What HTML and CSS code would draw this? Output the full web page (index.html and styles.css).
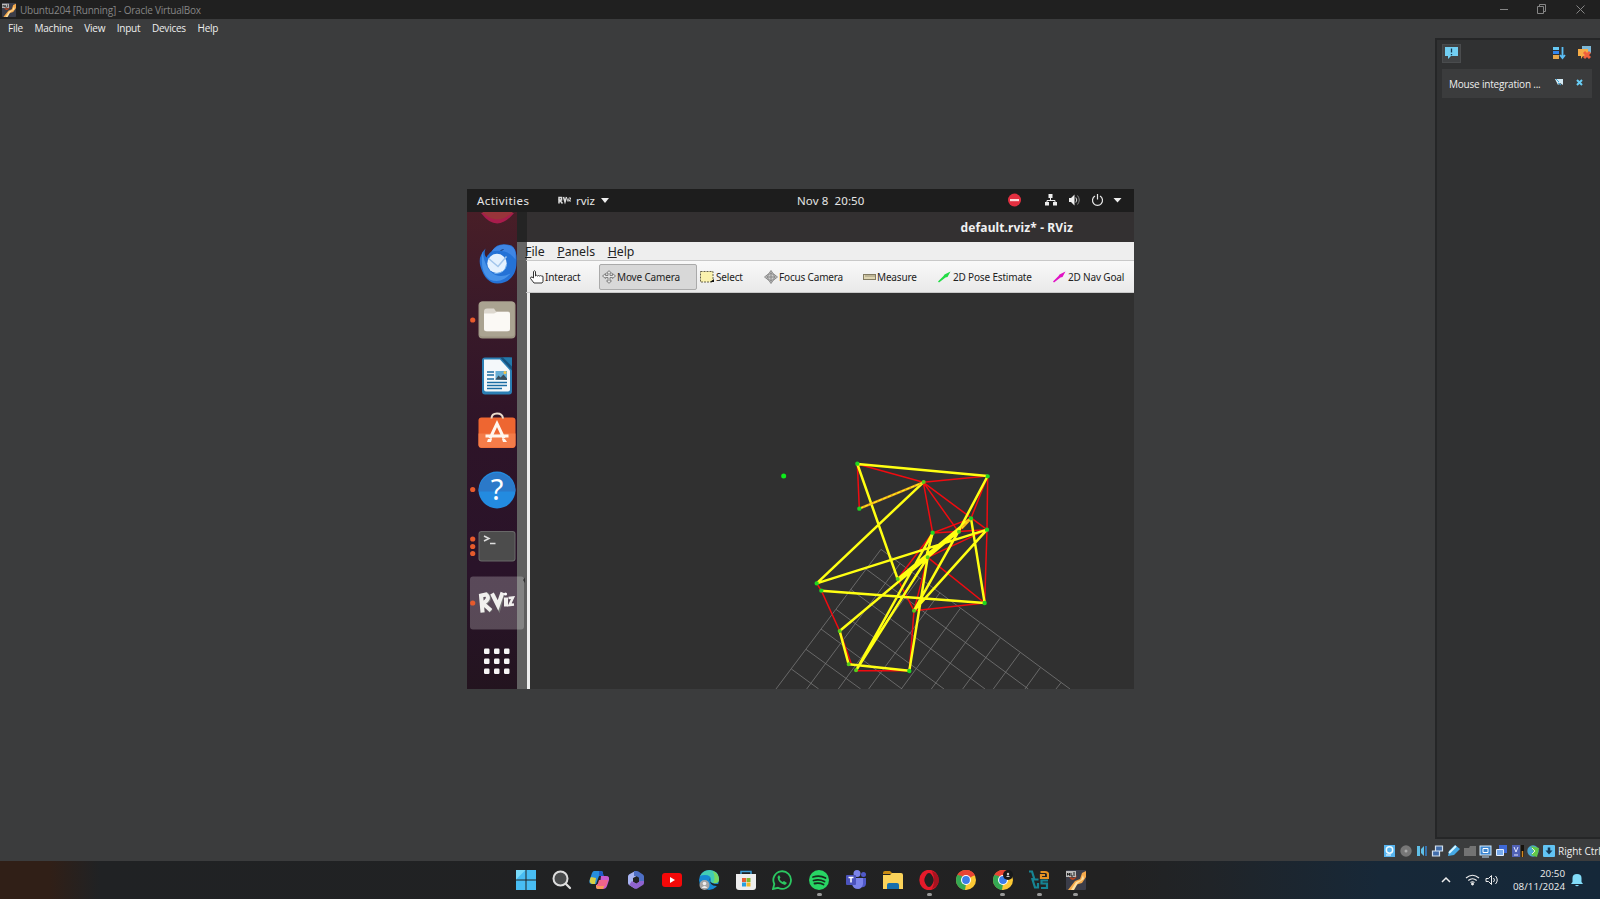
FILE: index.html
```html
<!DOCTYPE html>
<html lang="en">
<head>
<meta charset="utf-8">
<title>Ubuntu204 [Running] - Oracle VirtualBox</title>
<link rel="stylesheet" href="styles.css">
</head>
<body>
<svg class="defs" width="0" height="0">
  <defs>
    <symbol id="vbox" viewBox="0 0 20 20">
      <rect width="20" height="20" rx="1" fill="#3b3d49"/>
      <path d="M2 20 9 11 14 9 16 3 20 1V7L16 13 9 15 7 20Z" fill="#f5a94b"/>
      <path d="M5 20 10 12 15 10 17 5 18 9 12 13 8 20Z" fill="#ffe0a0"/>
      <path d="M3 7C6 12 10 10 11 5L8 8Z" fill="#b5441e"/>
      <rect y="1" width="10" height="6" fill="#bbb"/>
      <path d="M1.500 5.500V3l2 2.500V3M5 3v3h2M8 2v4" stroke="#222" fill="none"/>
    </symbol>
    <symbol id="chrome" viewBox="0 0 20 20">
      <circle cx="10" cy="10" r="10" fill="#fcc934"/>
      <path d="M10 10 1.340 5A10 10 0 0 1 18.660 5Z" fill="#e84435"/>
      <path d="M10 10 10 20A10 10 0 0 1 1.340 5Z" fill="#34a853"/>
      <path d="M10 5.500h8.900L18.600 5A10 10 0 0 0 10 0Z" fill="#e84435"/>
      <path d="M6 12.200 1.340 5 6 6Z" fill="#34a853"/>
      <path d="M14 12.500 10 20H9L10 14Z" fill="#fcc934"/>
      <circle cx="10" cy="10" r="5" fill="#fff"/><circle cx="10" cy="10" r="3.900" fill="#3b7de9"/>
    </symbol>
  </defs>
</svg>
<div class="screen">
  <header class="titlebar">
    <svg class="app-icon" width="14" height="14"><use href="#vbox"/></svg>
    <span class="window-title">Ubuntu204 [Running] - Oracle VirtualBox</span>
    <svg class="window-buttons" width="96" height="18" viewBox="0 0 96 18" fill="none" stroke="#858585">
      <path d="M0 8.500h8M37.500 5.500h6v7h-6zM39.500 5.500v-2h6v7h-2M76.500 4.500l8 8M84.500 4.500l-8 8"/>
    </svg>
  </header>
  <nav class="menubar"><span>File</span><span>Machine</span><span>View</span><span>Input</span><span>Devices</span><span>Help</span></nav>

  <main class="workspace">
    <section class="stage">
      <div class="guest">
        <div class="gnome-bar">
          <span class="activities">Activities</span>
          <svg class="rviz-mini" width="13" height="9" viewBox="0 0 13 9" fill="none" stroke="#ddd" stroke-width="1.500"><path d="M1 7.500V1.500h2.500v2.500H1.500L4.500 7.500M5.500 1l1.500 5 1.500-5M10 2.500v3"/><path d="M10.800 2h2l-1.500 3H13" stroke-width="1"/></svg>
          <span class="app-name">rviz</span>
          <i class="caret"></i>
          <span class="clock">Nov 8&nbsp; 20:50</span>
          <svg class="gnome-status" width="118" height="16" viewBox="0 0 118 16">
            <circle cx="7.500" cy="8" r="6.500" fill="#e32f40"/><rect x="3" y="7" width="9" height="2.200" fill="#fbdada"/>
            <path d="M41.500 2h4v4h-4zM38 10h4v3.500h-4zM46 10h4v3.500h-4z" fill="#eee"/><path d="M43.500 5v3.500M40 11V8.500h8V11" stroke="#eee" fill="none"/>
            <path d="M62 6h2l3.500-3.500v11L64 10h-2z" fill="#eee"/><path d="M68.800 5.500q2 2.500 0 5" stroke="#ddd" fill="none"/><path d="M70.500 3.500q3.500 4.500 0 9" stroke="#888" fill="none"/>
            <path d="M88 4A5 5 0 1 0 93 4M90.500 2v5.500" stroke="#e8e8e8" stroke-width="1.200" fill="none"/>
            <path d="M106.500 6h8l-4 4.500z" fill="#eee"/>
          </svg>
        </div>
        <div class="desktop">
          <aside class="dock">
            <svg class="slot-top" width="50" height="23.500" viewBox="467 212 50 23.500"><path d="M481 213Q497 234 514 213Z" fill="#a81c4c"/><path d="M482 212Q497 227 513 212Z" fill="#98343a"/></svg>
            <svg width="50" height="56" viewBox="467 235.500 50 56">
              <g transform="translate(-1.500 0)"><path d="M487 248Q479 256 482 266Q487 283 499 283C511 283 518 274 518 262Q519 249 513 245Q499 241 494 250Q489 254 488 257Q485 254 487 248Z" fill="#2472d6"/>
              <path d="M484 251Q481 272 491 279Q503 284 512 273Q500 279 492 271Q486 265 484 251Z" fill="#4692e9"/>
              <path d="M493 251Q501 241 513 246 518 248 517 259 509 248 493 251Z" fill="#3f86e4"/>
              <circle cx="498.500" cy="263" r="9.700" fill="#e4f1fe"/><path d="M490 258 499.500 266 508 256" stroke="#a2c5eb" stroke-width="1.500" fill="none"/><path d="M496 273Q507 273 508 264" stroke="#77b5f0" fill="none"/><path d="M502 250l3-1" stroke="#173a78"/></g>
            </svg>
            <svg width="50" height="56" viewBox="467 291.500 50 56">
              <circle class="dot" cx="472.700" cy="319.500" r="2.600"/><rect x="478.500" y="301" width="37" height="37" rx="4" fill="#9c9482"/><rect x="479.500" y="301" width="35" height="35" rx="3" fill="#aaa391"/>
              <path d="M484 311q0-3 3-3h7l2 3h12q2 0 2 3v14q0 3-3 3h-20q-3 0-3-3z" fill="#ddd8cf"/><path d="M484 313h10l3-1.500h11q2 0 2 2v15q0 2-2 2h-22q-2 0-2-2z" fill="#fbf9f5"/>
            </svg>
            <svg width="50" height="56" viewBox="467 347.500 50 56">
              <rect x="482" y="357" width="30" height="37" rx="3" fill="#2b7fb4"/><path d="M484 359h16l10 11v19q0 2-2 2h-22q-2 0-2-2z" fill="#f4f8fa"/><path d="M500 357h12v13z" fill="#17527d"/><path d="M503 357h9v9z" fill="#2378ab"/>
              <path d="M487 371.500h7M487 374.500h7M487 378.500h7M487 382h20M487 385h20M487 388h15" stroke="#1b6ca3" stroke-width="1.600"/><path d="M495.500 370.500h11.500v9h-11.500z" fill="#65add4"/><path d="M495.500 379l3-4 2 2 3-3 3.500 4v1.500z" fill="#384e5c"/><circle cx="505" cy="372" r="1.500" fill="#f5c746"/>
            </svg>
            <svg width="50" height="56" viewBox="467 403.500 50 56">
              <rect x="478.500" y="417" width="37" height="30.500" rx="3" fill="#ee6631"/><path d="M478.500 433h37v11q0 3-3 3h-31q-3 0-3-3z" fill="#f47c49"/><path d="M491.500 418q0-5 5.500-5t6 5" stroke="#eadccc" stroke-width="2" fill="none"/><path d="M490 438 497 423 504 438M485.500 435.500h23" stroke="#fff6ee" stroke-width="3" fill="none"/><path d="M487 441.500h4l1-3h-4zM502 438.500l1 3h4l-2-3z" fill="#fff6ee"/>
            </svg>
            <svg width="50" height="58" viewBox="467 459.500 50 58">
              <circle class="dot" cx="472.700" cy="489" r="2.600"/><circle cx="497" cy="489.500" r="18.500" fill="#238be0"/><path d="M478.500 491a18.500 18.500 0 0 1 37 0z" fill="#2b79c9"/><text class="help-mark" x="497" y="499.500" text-anchor="middle">?</text>
            </svg>
            <svg width="50" height="57" viewBox="467 517.500 50 57">
              <g class="dot"><circle cx="472.700" cy="538.500" r="2.600"/><circle cx="472.700" cy="546" r="2.600"/><circle cx="472.700" cy="553" r="2.600"/></g><rect x="478.500" y="530.500" width="37" height="30.500" rx="3" fill="#686868"/><rect x="479.500" y="531.500" width="35" height="28.500" rx="2" fill="#4c4c4c"/><path d="M484 535.500l5 2.500-5 2.500M490 543h5.500" stroke="#ddd" stroke-width="1.500" fill="none"/>
            </svg>
            <svg class="active-slot" width="58" height="56" viewBox="467 574.500 58 56">
              <rect x="470" y="576" width="54" height="53" rx="3" fill="#fff" fill-opacity=".23"/><circle class="dot" cx="472.700" cy="602.500" r="2.600"/>
              <g fill="none" stroke="#777" stroke-width="4" transform="translate(1 1)"><path d="M482 611 481 594 486 593Q491 598 483 602L490 610M492 593 498 606 502 592"/></g>
              <g fill="none" stroke="#f1f0ee" stroke-width="4"><path d="M482.500 612 481 595 486 594Q491 598 483 603L491 610M492 593 498 605 502.500 592M506 597V606"/><path d="M508.500 597.500 513 597 509.500 604.500 514 604" stroke-width="2.500"/></g><circle cx="505.500" cy="593.500" r="1.600" fill="#fff"/>
              <path d="M525 577l-2 2.500 2 3z" fill="#333"/>
            </svg>
            <svg width="50" height="58" viewBox="467 630.500 50 58" fill="#f7f5f6">
              <g id="dots"><rect x="484" y="648" width="5.500" height="5.500" rx="1.200"/><rect x="494" y="648" width="5.500" height="5.500" rx="1.200"/><rect x="504" y="648" width="5.500" height="5.500" rx="1.200"/></g><use href="#dots" y="10"/><use href="#dots" y="20"/>
            </svg>
          </aside>
          <div class="rviz">
            <div class="rviz-title"><b>default.rviz* - RViz</b></div>
            <div class="rviz-menu"><span><u>F</u>ile</span><span><u>P</u>anels</span><span><u>H</u>elp</span></div>
            <div class="tools">
              <div class="tool t-interact"><svg width="15" height="15" viewBox="0 0 15 15"><path d="M4.500 9V2.500q1-1.500 2 0V7q1-1.500 2 0 1-1 2 0 1-.8 2 0 1.500-.5 1.500 1V12.500l-1 1.500H5L1.500 9.500Q1.500 7.500 3 8z" fill="#fff" stroke="#333"/></svg><span>Interact</span></div>
              <div class="tool t-move"><svg width="14" height="14" viewBox="0 0 14 14" fill="#e5e5e5" stroke="#777" stroke-width=".9"><path d="M7 .7 9.500 3H8v2.500h2.500V3.500L13.500 6l-3 2.500V7.500H8V11h1.500L7 13.300 4.500 11H6V7.500H3.500v1L.5 6l3-2.500v2H6V3H4.500z"/></svg><span>Move Camera</span></div>
              <div class="tool t-select"><svg width="14" height="12" viewBox="0 0 14 12"><rect x=".5" y=".5" width="12.500" height="10.500" fill="#fbf2ae" stroke="#66624a" stroke-dasharray="2 1"/><path d="M10 11l4-3v3z" fill="#111"/></svg><span>Select</span></div>
              <div class="tool t-focus"><svg width="14" height="14" viewBox="0 0 14 14" fill="none" stroke="#888"><path d="M7 .5 9 3.500 13.500 7 9 10.500 7 13.500 5 10.500 .5 7 5 3.500z" fill="#ddd"/><circle cx="7" cy="7" r="3.500" fill="#ccc"/><path d="M7 2v10M2 7h10"/></svg><span>Focus Camera</span></div>
              <div class="tool t-measure"><svg width="13" height="6" viewBox="0 0 13 6"><rect x=".5" y=".5" width="12" height="5" fill="#ded5b2" stroke="#827b62"/><path d="M3 1v2M5 1v2M7 1v2M9 1v2M11 1v2" stroke="#827b62" stroke-width=".7"/></svg><span>Measure</span></div>
              <div class="tool t-pose"><svg width="14" height="12" viewBox="0 0 14 12"><path d="M0 10.500 5.500 5 6.500 3.500 12.500 .5 9.500 6 7.500 6.500 1 11.500z" fill="#22dc45"/></svg><span>2D Pose Estimate</span></div>
              <div class="tool t-nav"><svg width="14" height="12" viewBox="0 0 14 12"><path d="M0 10.500 5.500 5 6.500 3.500 12.500 .5 9.500 6 7.500 6.500 1 11.500z" fill="#e012c4"/></svg><span>2D Nav Goal</span></div>
            </div>
            <svg class="view" width="604" height="396" viewBox="530 293 604 396" fill="none">
              <g transform="translate(770 450) scale(.33333)">
                <g stroke="#777" stroke-width="2.400">
                  <path d="M333 298 18 717M333 298 900 717M390 341 110 717M448 384 205 717M510 428 296 717M571 475 394 717M629 520 484 717M690 565 578 717M750 608 670 717M811 653 765 717M873 698 858 717"/>
                  <path d="M288 357 775 717M242 418 645 717M198 478 522 717M153 537 396 717M108 598 272 717M64 657 146 717"/>
                </g>
                <path stroke="#f00b10" stroke-width="4.500" stroke-linejoin="bevel" d="M262 42 460 97 653 78 651 239 644 459M262 42 268 176M460 97 488 249M460 97 565 245M460 97 651 239M653 78 603 205 488 249 651 239 473 322 644 459 432 482 418 662 258 662M473 322 432 482 383 387 488 249M603 205 565 245M140 400 154 422 209 543 244 642"/>
                <path stroke="#ffff12" stroke-width="7.500" stroke-linejoin="bevel" d="M262 42 653 78 565 245 432 482M262 42 383 387 603 205 644 459 154 422M460 97 140 400 651 239 432 482M565 245 209 543 236 643 418 662 473 322 258 662 488 249 466 330M473 322 383 387"/>
                <path stroke="#ffff12" stroke-width="5" d="M488 249 466 330M473 322 280 625"/>
                <path stroke="#efa91c" stroke-width="7" d="M460 97 268 176M603 205 575 235"/><path stroke="#ffff12" stroke-width="3" stroke-dasharray="10 5" d="M460 97 268 176M603 205 565 245"/>
                <path stroke="#20d520" stroke-width="13" stroke-linecap="round" d="M262 41h0M653 79h0M268 176h0M603 205h0M651 239h0M488 248h0M140 400h0M154 422h0M644 459h0M418 663h0"/>
                <path stroke="#55cc1b" stroke-width="12" stroke-linecap="round" d="M461 96h0M567 245h0M473 322h0M383 387h0M432 482h0M209 543h0M236 643h0M258 661h0"/>
                <circle cx="41" cy="78" r="7.500" fill="#0eeb1b"/>
              </g>
            </svg>
          </div>
        </div>
      </div>
    </section>
    <aside class="notifications">
      <div class="note-tools">
        <div class="note-button"><svg width="13" height="13" viewBox="0 0 13 13"><path d="M0 0h13v9H6l-3 3V9H0z" fill="#72cff3"/><path d="M6.500 1.500v4M6.500 7v1.200" stroke="#163750" stroke-width="1.300"/></svg></div>
        <svg class="sort" width="13" height="14" viewBox="0 0 13 14"><rect y="1" width="6" height="3" fill="#67c9f4"/><rect y="5" width="6" height="3" fill="#3387ef"/><rect y="9" width="6" height="4" fill="#e7a84c"/><path d="M9.500 1v11M7 9l2.500 3L12 9" stroke="#5bbef5" stroke-width="1.800" fill="none"/></svg>
        <svg width="14" height="14" viewBox="0 0 14 14"><path d="M4 0h9v7H4z" fill="#7cb8d7"/><path d="M0 3h10v7H5l-2 3v-3H0z" fill="#f6ac46"/><path d="M6 6l6 6M12 6l-6 6" stroke="#f0603d" stroke-width="3"/></svg>
      </div>
      <div class="note"><span>Mouse integration ...</span><svg width="30" height="10" viewBox="0 0 30 10"><path d="M0 0h8v6L5 4 3 6z" fill="#d4eaf4"/><path d="M1 0l3 3M3 4l3 2" stroke="#3aa7dc"/><path d="M22 1l5 5M27 1l-5 5" stroke="#69cff7" stroke-width="2"/></svg></div>
    </aside>
  </main>

  <footer class="vm-status">
    <svg width="168" height="14" viewBox="1383 843 168 14">
      <rect x="1384" y="844" width="11" height="12" fill="#57b4ef"/><circle cx="1389.500" cy="849" r="3.200" fill="none" stroke="#eefaff" stroke-width="1.500"/><path d="M1386 854h5" stroke="#fff"/>
      <circle cx="1406" cy="850" r="5.700" fill="#777"/><circle cx="1406" cy="850" r="1.500" fill="#aaa"/>
      <path d="M1417 845h3v10h-3zM1421 848l3-3v10l-3-3z" fill="#60bfe7"/><path d="M1426 845v10" stroke="#3572ae" stroke-width="2"/>
      <path d="M1435.500 845h7v5h-7zM1432.500 850h7v5h-7z" fill="#416ca9" stroke="#d3e1ef" stroke-width="1.200"/>
      <path d="M1448 855l1-5 6-6 5 4-6 6z" fill="#45a9e5"/><path d="M1449 852l7-7" stroke="#d9f5ff" stroke-width="2"/>
      <path d="M1464 847h5l1-2h6v10h-12z" fill="#737373"/>
      <rect x="1480" y="845" width="11" height="9" fill="#3d86cf" stroke="#d4eafd"/><path d="M1483 847.500h5v4h-5z" stroke="#fff" fill="none"/><path d="M1482 856h7" stroke="#bddcf7"/>
      <path d="M1499 844h8v8h-8z" fill="#3e69d7"/><path d="M1496.500 848.500h7v6h-7z" fill="#79abec" stroke="#e2efff"/>
      <rect x="1512" y="844" width="8" height="12" fill="#5061b5"/><path d="M1514 846l2 5 2-5M1514 854h4" stroke="#e3e7ff" fill="none"/><path d="M1522.500 844v12" stroke="#16120c" stroke-width="3"/><path d="M1522.500 850v6" stroke="#d68a1f" stroke-width="1.500"/>
      <circle cx="1533" cy="850" r="5.700" fill="#4ba7d2"/><path d="M1531 845l8 2-2 9-6-2 3-3z" fill="#62c848"/><path d="M1532 847l3 3-3 3" stroke="#e9f6ce" fill="none"/>
    </svg>
    <svg class="host-key" width="12" height="12" viewBox="0 0 12 12"><rect width="12" height="12" rx="1" fill="#62c4f4"/><path d="M6 2.500v4" stroke="#173a56" stroke-width="2.500"/><path d="M2.500 5.500h7L6 9.500z" fill="#173a56"/></svg>
    <span>Right Ctrl</span>
  </footer>

  <footer class="taskbar">
    <div class="task-icons">
      <i><svg viewBox="0 0 20 20"><path d="M0 0h9.500v9.500H0zM10.500 0H20v9.500h-9.500zM0 10.500h9.500V20H0zM10.500 10.500H20V20h-9.500z" fill="#48bdf3"/><path d="M0 0h9.500L0 9.500z" fill="#78daf9"/></svg></i>
      <i><svg viewBox="0 0 20 20"><circle cx="8.500" cy="8.500" r="7" fill="#494b4c" stroke="#ddd" stroke-width="2"/><path d="M14 14l4 4" stroke="#ddd" stroke-width="2.300" stroke-linecap="round"/></svg></i>
      <i><svg viewBox="0 0 20 20"><path d="M5 1h7q2 0 2 2l-1 3h-3L7 14H3Q-1 14 1 9L3 3Q4 1 5 1Z" fill="#268edc"/><path d="M2 7l5 1-1 6H3Q0 13 1 9Z" fill="#d8cf42"/><path d="M10 1h3l2 5h-5z" fill="#2259c7"/><path d="M12 6h5q4 0 3 4l-2 6q-1 3-4 3H9q-2 0-2-2l1-3h3z" fill="#c85bcf"/><path d="M7 15h9l-2 4H9Q7 19 7 16Z" fill="#f79858"/><path d="M10 10h9l-2 6H8z" fill="#ef648a"/></svg></i>
      <i><svg viewBox="0 0 20 20" fill="none" stroke-linejoin="round" stroke-width="5"><path d="M10 3.500 4.500 6.500V13L10 16.500" stroke="#a8b4f2"/><path d="M8 3.500 11 3.500 15.500 6.500V11" stroke="#4e6fc5"/><path d="M4.500 13 10 16.500 15.500 13V11" stroke="#8f63cf"/></svg></i>
      <i><svg viewBox="0 0 20 20"><rect y="3" width="20" height="14" rx="3" fill="#f50808"/><path d="M8 7l5 3-5 3z" fill="#fff"/></svg></i>
      <i><svg viewBox="0 0 20 20"><circle cx="10" cy="10" r="10" fill="#1689d3"/><path d="M1 6Q4 0 11 0q9 1 9 9 0 5-6 4-3 0-2-3 0-5-6-5Q3 5 1 6Z" fill="#43cdb4"/><path d="M14 1q6 3 6 9-1 4-6 3 3-4 0-12Z" fill="#79d960"/><path d="M11 8q-2 6 9 6l-1 2q-9 1-8-8" fill="#202326"/><circle cx="5.500" cy="15" r="5" fill="#a6a6a6"/><circle cx="5.500" cy="13.500" r="1.800" fill="#eee"/><path d="M2.500 18q3-4 6 0z" fill="#eee"/></svg></i>
      <i><svg viewBox="0 0 20 20"><path d="M5 5V1.500h10V5" stroke="#3c9fd8" stroke-width="1.500" fill="none"/><path d="M0 4h20v13q0 3-3 3H3q-3 0-3-3z" fill="#eee"/><path d="M6 8h4v4H6z" fill="#e65c32"/><path d="M10.500 8h4v4h-4z" fill="#83b82b"/><path d="M6 12.500h4v4H6z" fill="#289fe0"/><path d="M10.500 12.500h4v4h-4z" fill="#f0b928"/></svg></i>
      <i><svg viewBox="0 0 20 20" fill="none" stroke="#2bc761"><path d="M2.300 14A8.800 8.800 0 1 1 6 17.800L1 19Z" stroke-width="1.800"/><path d="M7 5 5.500 7Q6 13 13 15l2-2-3-2-1.500 1Q8.500 11 7.500 9L8.500 7.500Z" fill="#2bc761" stroke="none"/></svg></i>
      <i class="running"><svg viewBox="0 0 20 20"><circle cx="10" cy="10" r="10" fill="#28d564"/><path d="M4 7q7-2 12.500 1M4.500 10.500q6-1.500 11 1M5.500 13.500q5-1 9 1" stroke="#162b1c" stroke-width="1.800" fill="none" stroke-linecap="round"/></svg></i>
      <i><svg viewBox="0 0 20 20"><circle cx="11" cy="3.500" r="3.500" fill="#7b83eb"/><circle cx="17.500" cy="4.500" r="2.500" fill="#5059c9"/><path d="M14 8h6v6q-1 4-5 3z" fill="#5059c9"/><path d="M6 8h11v6q-1 5-5 5-5 0-6-5z" fill="#7b83eb"/><rect y="5" width="10" height="10" rx="1" fill="#4b53bc"/><path d="M2.500 7.500h5M5 7.500v5" stroke="#fff" stroke-width="1.500"/></svg></i>
      <i><svg viewBox="0 0 20 20"><path d="M0 3q0-2 2-2h5l3 3H0z" fill="#c98c12"/><path d="M0 5h7l2-2h9q2 0 2 2v14H0z" fill="#fbd35a"/><path d="M4 19v-4q0-2 2-2h8q2 0 2 2v4z" fill="#176fae"/></svg></i>
      <i class="running"><svg viewBox="0 0 20 20"><ellipse cx="10" cy="10" rx="7.200" ry="7.700" fill="none" stroke="#e51a2a" stroke-width="5"/><path d="M13 1Q20 4 20 10t-7 9q4-8 0-18" fill="#a61320"/><ellipse cx="10" cy="10" rx="4" ry="7" fill="#222"/></svg></i>
      <i><svg><use href="#chrome"/></svg></i>
      <i class="running"><svg viewBox="0 0 20 20"><use href="#chrome" width="20" height="20"/><circle cx="15" cy="5" r="5" fill="#17191a"/><circle cx="15" cy="4" r="1.200" fill="#ccc"/><path d="M13 7q2-3 4 0z" fill="#ccc"/></svg></i>
      <i class="running"><svg viewBox="0 0 20 20" fill="none" stroke-width="2.200"><path d="M0 1.500h3l2.500 8H9.500M3 8 6 17.500H9V13M19 10.500h-6.500v3H18v4.500h-6" stroke="#168493"/><path d="M11.500 2h4.500q3 0 3 2.500V8h-7V5h4" stroke="#e69324"/></svg></i>
      <i class="running"><svg><use href="#vbox"/></svg></i>
    </div>
    <div class="tray">
      <svg width="62" height="16" viewBox="1440 872 62 16" fill="none" stroke="#eee"><path d="M1442 882l4-4 4 4" stroke-width="1.500"/><path d="M1466 878q6.500-5.500 13 0M1468.300 880.500q4.200-3.500 8.400 0M1470.500 882.500q2-1.500 4 0" stroke-width="1.200"/><circle cx="1472.500" cy="884" r="1" fill="#fff"/><path d="M1486 878.500h2.500l3-3v9l-3-3H1486zM1493.500 878q2 2 0 4M1495.500 876q3.500 4 0 8"/></svg>
      <div class="time">20:50<br>08/11/2024</div>
      <svg class="bell" width="12" height="14" viewBox="0 0 12 14"><path d="M1.500 9V5q0-4 4.500-4t4.500 4v4l1.500 2H0zM4 12h4q-2 2.500-4 0" fill="#82dcf9"/></svg>
    </div>
  </footer>
</div>
</body>
</html>
```
FILE: styles.css
```css
*{box-sizing:border-box}
body{margin:0;overflow:hidden;background:#3b3c3d;font-family:"Open Sans","Noto Sans",sans-serif}
.defs{position:absolute}
svg{display:block;flex:none}
span,b{white-space:nowrap}
.screen{width:1600px;height:899px;display:flex;flex-direction:column;overflow:hidden}
.titlebar{height:19px;flex:none;background:#202020;display:flex;align-items:center;padding-left:2px;color:#858585;font-size:10px}
.app-icon{margin-right:4px}
.window-title{letter-spacing:-.23px}
.window-buttons{margin-left:auto;margin-right:4px}
.menubar{height:19px;flex:none;display:flex;align-items:center;gap:11.600px;padding:0 0 1px 8px;color:#eee;font-size:10px;letter-spacing:-.23px}
.workspace{height:802px;flex:none;display:flex}
.stage{width:1436px;flex:none;padding:151px 0 0 467px}
.guest{width:667px;height:500px;background:#303030;overflow:hidden;font-family:"Noto Sans","Open Sans",sans-serif}
.gnome-bar{height:23px;background:#1d1d1d;color:#e6e6e6;display:flex;align-items:center;padding:0 0 1px 10px;font-size:11.500px}
.activities{width:81px;letter-spacing:.45px}
.rviz-mini{margin-right:5px}
.app-name{width:25px}
.caret{width:0;height:0;border:4px solid transparent;border-top:5px solid #eee;border-bottom:0}
.clock{margin-left:188px;width:210px;letter-spacing:.1px}
.desktop{display:flex;height:477px}
.dock{width:50px;flex:none;background:linear-gradient(#481e27,#3a1a29 20%,#2e1428 45%,#291329 75%,#23141f);position:relative;z-index:1}
.dot{fill:#e65a2c}
.help-mark{font:29px "Noto Sans",sans-serif;fill:#fff}
.rviz{width:617px;display:flex;flex-direction:column;background:linear-gradient(90deg,#606060 10px,#eee 10px 13px,#303030 13px)}
.rviz-title{height:30px;background:linear-gradient(90deg,#242424 10px,#333031 10px);color:#f1f1f1;text-align:right;padding:8px 61px 0 0;font-size:12px;letter-spacing:.12px;line-height:16px}
.rviz-menu{height:18px;background:linear-gradient(90deg,#656565 10px,#eee 10px);color:#222;display:flex;padding-left:8px;gap:12.500px;font-size:12.300px;line-height:20px}
.rviz-menu u{text-underline-offset:1px}
.tools{height:33px;display:flex;align-items:center;background:linear-gradient(90deg,#606060 10px,transparent 10px),linear-gradient(#f9f9f9,#e9e9e9);border-top:1px solid #d3d3d3;border-bottom:1px solid #b5b5b5;border-image:linear-gradient(90deg,#606060 10px,#c8c8c8 10px) 1;border-left:0;border-right:0;color:#222;padding-left:12px;font-size:10px;letter-spacing:-.17px}
.tool{display:flex;align-items:center;height:26px;gap:1px;flex:none}
.t-interact{width:70px}
.t-move{width:98px;background:#d8d8d8;border:1px solid #aaa;border-radius:2px;padding-left:2px}
.t-select{width:67px;padding-left:3px}
.t-select svg{margin-right:1px}
.t-focus{width:99px}
.t-measure{width:75px}
.t-pose{width:115px}
.view{background:#303030;margin-left:13px}
.notifications{width:165px;flex:none;height:801px;background:#303132;border-left:2px solid #252627;border-top:2px solid #252627;border-bottom:2px solid #252627;padding:3px 8px 0 5px;margin-left:-1px}
.note-tools{height:20px;display:flex;align-items:center}
.note-button{width:19px;height:19px;background:#404244;border:1px solid #4a4c4e;display:grid;place-items:center}
.sort{margin-left:auto;margin-right:12px}
.note{height:29px;margin-top:6px;background:#3b3c3d;display:flex;align-items:center;justify-content:space-between;padding:0 7px;color:#eee;font-size:10px;letter-spacing:-.2px}
.vm-status{height:21px;flex:none;display:flex;align-items:center;padding-left:1383px;color:#eee;font-size:10px}
.host-key{margin:0 3px 0 -8px;position:relative}
.taskbar{height:38px;flex:none;background:linear-gradient(90deg,#301f17 0,#301f17 50px,#202224 100px,#222 1120px,#202428 1210px,#172838 1380px,#152839);display:flex;align-items:center}
.task-icons{display:grid;grid-template-columns:repeat(16,36.700px);margin-left:507.300px;height:38px}
.task-icons i{display:flex;flex-direction:column;align-items:center;padding-top:9px}
.task-icons svg{width:20px;height:20px}
.running::after{content:"";width:5px;height:3px;border-radius:2px;background:#999;margin-top:3px}
.tray{margin-left:auto;display:flex;align-items:center;padding-right:17px;color:#eee;font-size:9.800px;line-height:13.500px}
.time{width:63px;text-align:right}
.bell{margin-left:6px}
```
